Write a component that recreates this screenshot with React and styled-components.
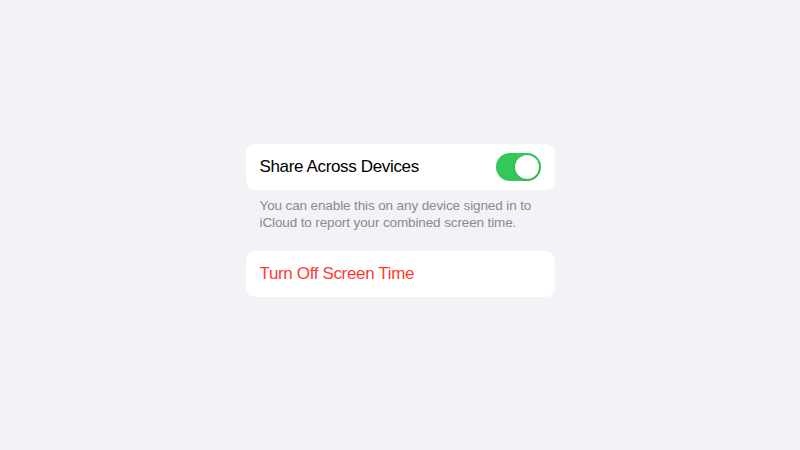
import React, { useState } from 'react';
import styled, { createGlobalStyle } from 'styled-components';

const GlobalStyle = createGlobalStyle`
  html, body {
    margin: 0;
    padding: 0;
    background: #f2f2f7;
  }
  body {
    font-family: 'Liberation Sans', 'Inter', sans-serif;
    -webkit-font-smoothing: antialiased;
  }
`;

const Page = styled.div`
  width: 100%;
  height: 100vh;
  display: flex;
  align-items: center;
  justify-content: center;
  padding-bottom: 10px;
  box-sizing: border-box;
`;

const Settings = styled.div`
  width: 309px;
  display: flex;
  flex-direction: column;
`;

const Cell = styled.div`
  height: 46px;
  box-sizing: border-box;
  padding: 1px 14px 0 14px;
  display: flex;
  align-items: center;
  justify-content: space-between;
  background: #ffffff;
  border-radius: 9px;
  font-size: 17px;
  letter-spacing: -0.35px;
  color: ${props => (props.destructive ? '#ff3b30' : '#000000')};
  cursor: ${props => (props.destructive ? 'pointer' : 'default')};
`;

const Footer = styled.p`
  margin: 0;
  padding: 7px 10px 20px 14px;
  font-size: 13.5px;
  line-height: 17px;
  letter-spacing: -0.12px;
  color: #8a8a8e;
`;

const Track = styled.button`
  width: 45px;
  height: 28px;
  padding: 2px;
  border: none;
  border-radius: 14px;
  background: ${props => (props.on ? '#34c759' : '#e9e9eb')};
  display: flex;
  justify-content: ${props => (props.on ? 'flex-end' : 'flex-start')};
  cursor: pointer;
  box-sizing: border-box;
`;

const Knob = styled.span`
  width: 24px;
  height: 24px;
  border-radius: 50%;
  background: #ffffff;
  box-shadow: 0 1px 3px rgba(0, 0, 0, 0.15), 0 0 0 0.5px rgba(0, 0, 0, 0.04);
`;

const Toggle = ({ on, onChange }) => (
  <Track on={on} onClick={() => onChange(!on)} aria-pressed={on}>
    <Knob />
  </Track>
);

const App = () => {
  const [shared, setShared] = useState(true);

  return (
    <>
      <GlobalStyle />
      <Page>
        <Settings>
          <Cell>
            Share Across Devices
            <Toggle on={shared} onChange={setShared} />
          </Cell>
          <Footer>
            You can enable this on any device signed in to iCloud to report your combined screen time.
          </Footer>
          <Cell destructive>Turn Off Screen Time</Cell>
        </Settings>
      </Page>
    </>
  );
};

export default App;
